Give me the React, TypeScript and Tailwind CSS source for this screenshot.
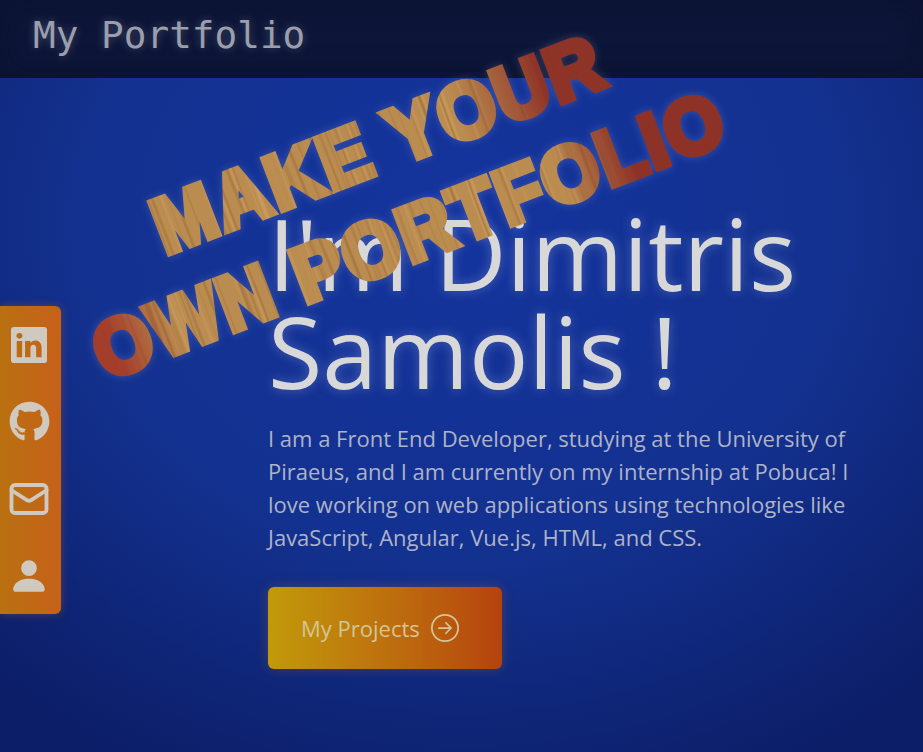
import React from 'react';
import { BsArrowRightCircle, BsLinkedin, BsPersonFill } from 'react-icons/bs';
import { FaGithub } from 'react-icons/fa';
import { Mail } from 'lucide-react';

// wood grain streaks, same every render
const streaks = Array.from({ length: 150 }, (_, i) => {
  const rnd = (n: number) => {
    const v = Math.sin((i + 1) * n * 12.9898) * 43758.5453;
    return v - Math.floor(v);
  };
  const x = rnd(1) * 800;
  const bend = (rnd(2) - 0.5) * 10;
  return {
    d: `M${x} 0 C${x + bend} 50 ${x - bend} 100 ${x + bend / 2} 160`,
    width: 0.6 + rnd(3) * 3,
    color: rnd(4) > 0.45 ? '#7d4f22' : '#e0b676',
    opacity: 0.08 + rnd(5) * 0.22,
  };
});

// pattern contents are drawn from the tile's own origin, so 0..800 x 0..160 here
function WoodPattern({ id, overlay }: { id: string; overlay: string }) {
  return (
    <pattern id={id} patternUnits="userSpaceOnUse" x="-400" y="-120" width="800" height="160">
      <rect width="800" height="160" fill="#bb8c50" />
      {streaks.map((s, i) => (
        <path key={i} d={s.d} fill="none" stroke={s.color} strokeWidth={s.width} strokeOpacity={s.opacity} />
      ))}
      <rect width="800" height="160" fill={`url(#${overlay})`} />
    </pattern>
  );
}

function Banner() {
  return (
    <svg className="pointer-events-none absolute inset-0 drop-shadow-[0_0_4px_rgba(210,215,255,0.2)]" width="923" height="752">
      <defs>
        <linearGradient id="redTop" gradientUnits="userSpaceOnUse" x1="0" y1="0" x2="800" y2="0">
          <stop offset="0.61" stopColor="#8c2f25" stopOpacity="0" />
          <stop offset="0.69" stopColor="#8c2f25" stopOpacity="0.6" />
          <stop offset="0.73" stopColor="#8c2f25" stopOpacity="0.95" />
        </linearGradient>
        <linearGradient id="redBottom" gradientUnits="userSpaceOnUse" x1="0" y1="0" x2="800" y2="0">
          <stop offset="0.085" stopColor="#a23a28" stopOpacity="0.95" />
          <stop offset="0.17" stopColor="#a23a28" stopOpacity="0" />
          <stop offset="0.71" stopColor="#8c2f25" stopOpacity="0" />
          <stop offset="0.78" stopColor="#8c2f25" stopOpacity="0.7" />
          <stop offset="0.81" stopColor="#8c2f25" stopOpacity="0.97" />
        </linearGradient>
        <WoodPattern id="woodTop" overlay="redTop" />
        <WoodPattern id="woodBottom" overlay="redBottom" />
      </defs>
      <g fontFamily="'Liberation Sans', sans-serif" fontWeight="700" fontSize="78" letterSpacing="3" textAnchor="middle" strokeWidth="7" strokeLinejoin="miter">
        <text transform="translate(388 169) rotate(-21) scale(0.95 1)" fill="url(#woodTop)" stroke="url(#woodTop)">
          MAKE YOUR
        </text>
        <text transform="translate(419 260) rotate(-21) scale(0.95 1)" fill="url(#woodBottom)" stroke="url(#woodBottom)">
          OWN PORTFOLIO
        </text>
      </g>
    </svg>
  );
}

export default function App() {
  return (
    <div className="relative h-[752px] w-[923px] overflow-hidden bg-[#12308f] bg-[radial-gradient(ellipse_75%_80%_at_50%_30%,#14349e_0%,#13318f_55%,#0c1e68_100%)] font-['Open_Sans',sans-serif]">
      {/* Header */}
      <header className="flex h-[78px] items-center bg-[#0d1638] pb-[7px] pl-[33px] shadow-[inset_0_0_30px_rgba(5,10,35,0.35)]">
        <h1 className="font-['DejaVu_Sans_Mono',monospace] text-[37.7px] leading-none text-[#9b9eac] [text-shadow:0_0_8px_rgba(200,200,220,0.3)]">
          My Portfolio
        </h1>
      </header>

      <div className="flex">
        {/* Social links */}
        <nav className="mt-[228px] flex h-[308px] w-[61px] shrink-0 flex-col rounded-r-md bg-gradient-to-r from-[#b9700f] to-[#c6611a] pr-[3px] text-[#cfc9c0] shadow-[0_0_10px_rgba(200,110,30,0.35)]">
          <a className="flex h-[77px] items-center justify-center"><BsLinkedin className="text-[36px]" /></a>
          <a className="flex h-[77px] items-center justify-center"><FaGithub className="text-[41px]" /></a>
          <a className="flex h-[77px] items-center justify-center"><Mail size={42} strokeWidth={2.2} /></a>
          <a className="flex h-[77px] items-center justify-center"><BsPersonFill className="text-[42px]" /></a>
        </nav>

        {/* Intro */}
        <main className="ml-[207px] w-[600px] pt-[126px]">
          <h2 className="text-[99px] leading-[98px] text-[#d9d8d8] [text-shadow:0_0_12px_rgba(220,225,255,0.28)]">
            I'm Dimitris Samolis !
          </h2>
          <p className="mt-[22px] w-[590px] text-[22px] leading-[33px] text-[#aeb3c8]">
            I am a Front End Developer, studying at the University of Piraeus, and I am currently on my internship at Pobuca! I love working on web applications using technologies like JavaScript, Angular, Vue.js, HTML, and CSS.
          </p>
          <button className="mt-[33px] flex h-[82px] w-[234px] items-center gap-[11px] rounded-md bg-gradient-to-r from-[#c19a0a] to-[#b5420e] pl-[33px] text-[22px] text-[#d3c596] shadow-[0_0_12px_rgba(190,120,40,0.3)]">
            My Projects
            <BsArrowRightCircle className="text-[28px]" />
          </button>
        </main>
      </div>

      <Banner />
    </div>
  );
}
